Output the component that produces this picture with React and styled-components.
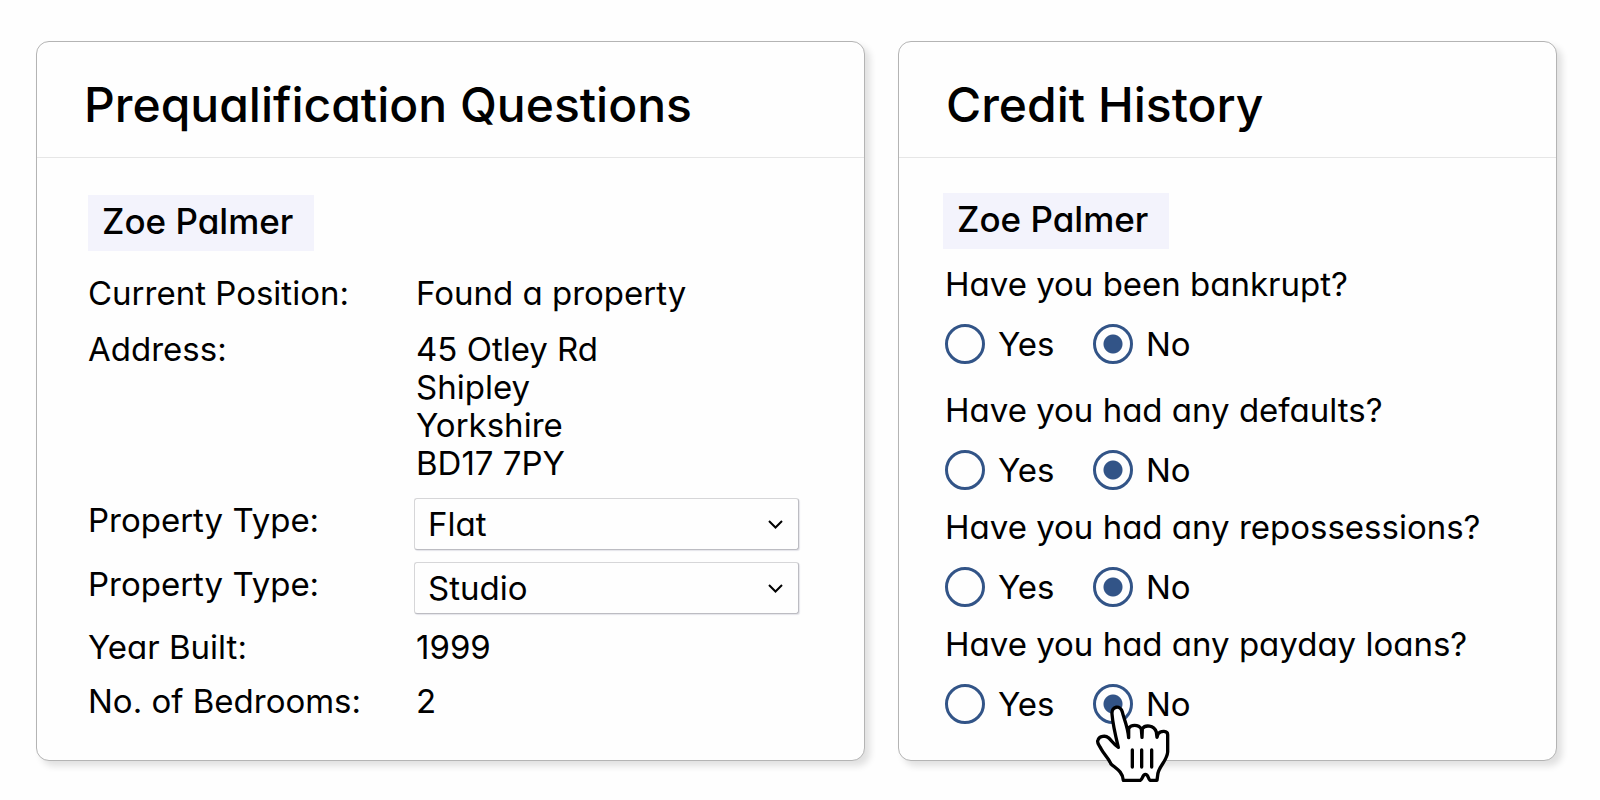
import React, { useState } from 'react';
import styled, { createGlobalStyle } from 'styled-components';

const GlobalStyle = createGlobalStyle`
  *, *::before, *::after { box-sizing: border-box; }
  body {
    margin: 0;
    background: #fefefe;
    color: #000;
    font-family: Inter, "Liberation Sans", sans-serif;
    font-size: 33px;
    line-height: 38px;
    font-feature-settings: "cv11";
  }
`;

const Page = styled.main`
  display: grid;
  grid-template-columns: minmax(0, 829fr) minmax(0, 659fr);
  gap: 33px;
  padding: 41px 43px 39px 36px;
`;

const Card = styled.section`
  background: #fefefe;
  border: 1px solid #b4b4b4;
  border-radius: 13px;
  box-shadow: 5px 5px 7px rgba(0, 0, 0, 0.12);
`;

const CardHeader = styled.header`
  padding: 35px 47px 24px;
  border-bottom: 1px solid #e6e6e6;
`;

const Title = styled.h2`
  margin: 0;
  font-size: 48px;
  line-height: 56px;
  font-weight: 500;
  white-space: nowrap;
`;

const CardBody = styled.div`
  padding: ${(p) => p.$padding};
`;

const Applicant = styled.h3`
  width: fit-content;
  margin: 0;
  padding: 0 21px 4px 14px;
  background: #f3f3fc;
  font-size: 35px;
  line-height: 52px;
  font-weight: 500;
`;

const Row = styled.div`
  display: grid;
  grid-template-columns: 326px minmax(0, 1fr);
  margin-top: ${(p) => p.$gap}px;
`;

const Label = styled.span`
  padding-top: ${(p) => (p.$field ? 3 : 0)}px;
`;

const Value = styled.div`
  padding-left: 2px;
`;

const SelectWrap = styled.div`
  position: relative;
`;

const Select = styled.select`
  appearance: none;
  display: block;
  width: 100%;
  height: 52px;
  padding: 0 48px 0 13px;
  border: 1px solid #d6d6d8;
  border-right-color: #bcbcc2;
  border-bottom-color: #bcbcc2;
  border-radius: 3px;
  box-shadow: 1px 1px 1px rgba(40, 40, 90, 0.12);
  background: #fefefe;
  color: inherit;
  font: inherit;
  font-feature-settings: inherit;
`;

const Chevron = styled.svg`
  position: absolute;
  top: 22px;
  right: 16px;
  width: 15px;
  height: 9px;
  pointer-events: none;
`;

const Question = styled.fieldset`
  margin: ${(p) => p.$gap}px 0 0;
  padding: 0 0 0 2px;
  border: 0;
  min-width: 0;
`;

const Legend = styled.legend`
  padding: 0;
  white-space: nowrap;
`;

const Options = styled.div`
  display: grid;
  grid-template-columns: 148px auto;
  justify-content: start;
  margin-top: 21px;
`;

const Option = styled.label`
  position: relative;
  display: flex;
  align-items: center;
  gap: 13px;
  height: 40px;
`;

const Radio = styled.input`
  appearance: none;
  flex: none;
  width: 40px;
  height: 40px;
  margin: 0;
  border: 3px solid #325487;
  border-radius: 50%;
  background: #fefefe;
  &:checked {
    background: radial-gradient(circle, #325487 9px, #fefefe 10px);
  }
`;

const Pointer = styled.svg`
  position: absolute;
  left: 2px;
  top: 20px;
  width: 76px;
  height: 80px;
  pointer-events: none;
`;

const Hand = () => (
  <Pointer viewBox="105 132 228 240" aria-hidden="true">
    <path
      d="M175 262 C166 225 158 190 156 162 C154 138 181 134 187 156 C192 178 203 198 206 233 L206 205 C212 194 235 192 244 207 L246 232 L247 206 C255 194 282 194 289 216 L291 232 L294 222 C303 211 323 212 323 224 L323 276 C321 304 293 322 293 346 L291 361 L270 361 C264 356 265 343 256 343 C247 343 250 356 241 361 L190 361 C188 334 167 325 153 312 C143 290 131 282 124 268 C118 256 109 249 114 240 C118 228 137 226 145 233 C154 240 161 254 175 262 Z"
      fill="#fff"
      stroke="#000"
      strokeWidth="10"
      strokeLinejoin="round"
    />
    <path d="M217 270V321M245 270V321M275 270V321" stroke="#000" strokeWidth="10" strokeLinecap="round" />
  </Pointer>
);

const SelectField = ({ id, label, options, gap }) => (
  <Row $gap={gap}>
    <Label as="label" htmlFor={id} $field>{label}</Label>
    <SelectWrap>
      <Select id={id} defaultValue={options[0]}>
        {options.map((o) => <option key={o}>{o}</option>)}
      </Select>
      <Chevron viewBox="0 0 15 9" aria-hidden="true">
        <path d="M1 1 L7.5 7.5 L14 1" fill="none" stroke="#000" strokeWidth="2" />
      </Chevron>
    </SelectWrap>
  </Row>
);

const Field = ({ label, gap, children }) => (
  <Row $gap={gap}>
    <Label>{label}</Label>
    <Value>{children}</Value>
  </Row>
);

const questions = [
  { id: 'bankrupt', text: 'Have you been bankrupt?', gap: 16 },
  { id: 'defaults', text: 'Have you had any defaults?', gap: 27 },
  { id: 'repossessions', text: 'Have you had any repossessions?', gap: 18 },
  { id: 'payday', text: 'Have you had any payday loans?', gap: 18 },
];

const YesNo = ({ id, text, gap, pointed }) => {
  const [answer, setAnswer] = useState('No');
  return (
    <Question $gap={gap}>
      <Legend>{text}</Legend>
      <Options>
        {['Yes', 'No'].map((o) => (
          <Option key={o}>
            <Radio type="radio" name={id} checked={answer === o} onChange={() => setAnswer(o)} />
            {o}
            {pointed && o === 'No' && <Hand />}
          </Option>
        ))}
      </Options>
    </Question>
  );
};

export default function App() {
  return (
    <>
      <GlobalStyle />
      <Page>
        <Card>
          <CardHeader><Title>Prequalification Questions</Title></CardHeader>
          <CardBody $padding="37px 65px 40px 51px">
            <Applicant>Zoe Palmer</Applicant>
            <Field label="Current Position:" gap={23}>Found a property</Field>
            <Field label="Address:" gap={18}>
              45 Otley Rd<br />Shipley<br />Yorkshire<br />BD17 7PY
            </Field>
            <SelectField id="type" label="Property Type:" options={['Flat', 'House']} gap={16} />
            <SelectField id="subtype" label="Property Type:" options={['Studio', 'Apartment']} gap={12} />
            <Field label="Year Built:" gap={14}>1999</Field>
            <Field label="No. of Bedrooms:" gap={16}>2</Field>
          </CardBody>
        </Card>
        <Card>
          <CardHeader><Title>Credit History</Title></CardHeader>
          <CardBody $padding="35px 44px 34px">
            <Applicant>Zoe Palmer</Applicant>
            {questions.map((q) => <YesNo key={q.id} {...q} pointed={q.id === 'payday'} />)}
          </CardBody>
        </Card>
      </Page>
    </>
  );
}
